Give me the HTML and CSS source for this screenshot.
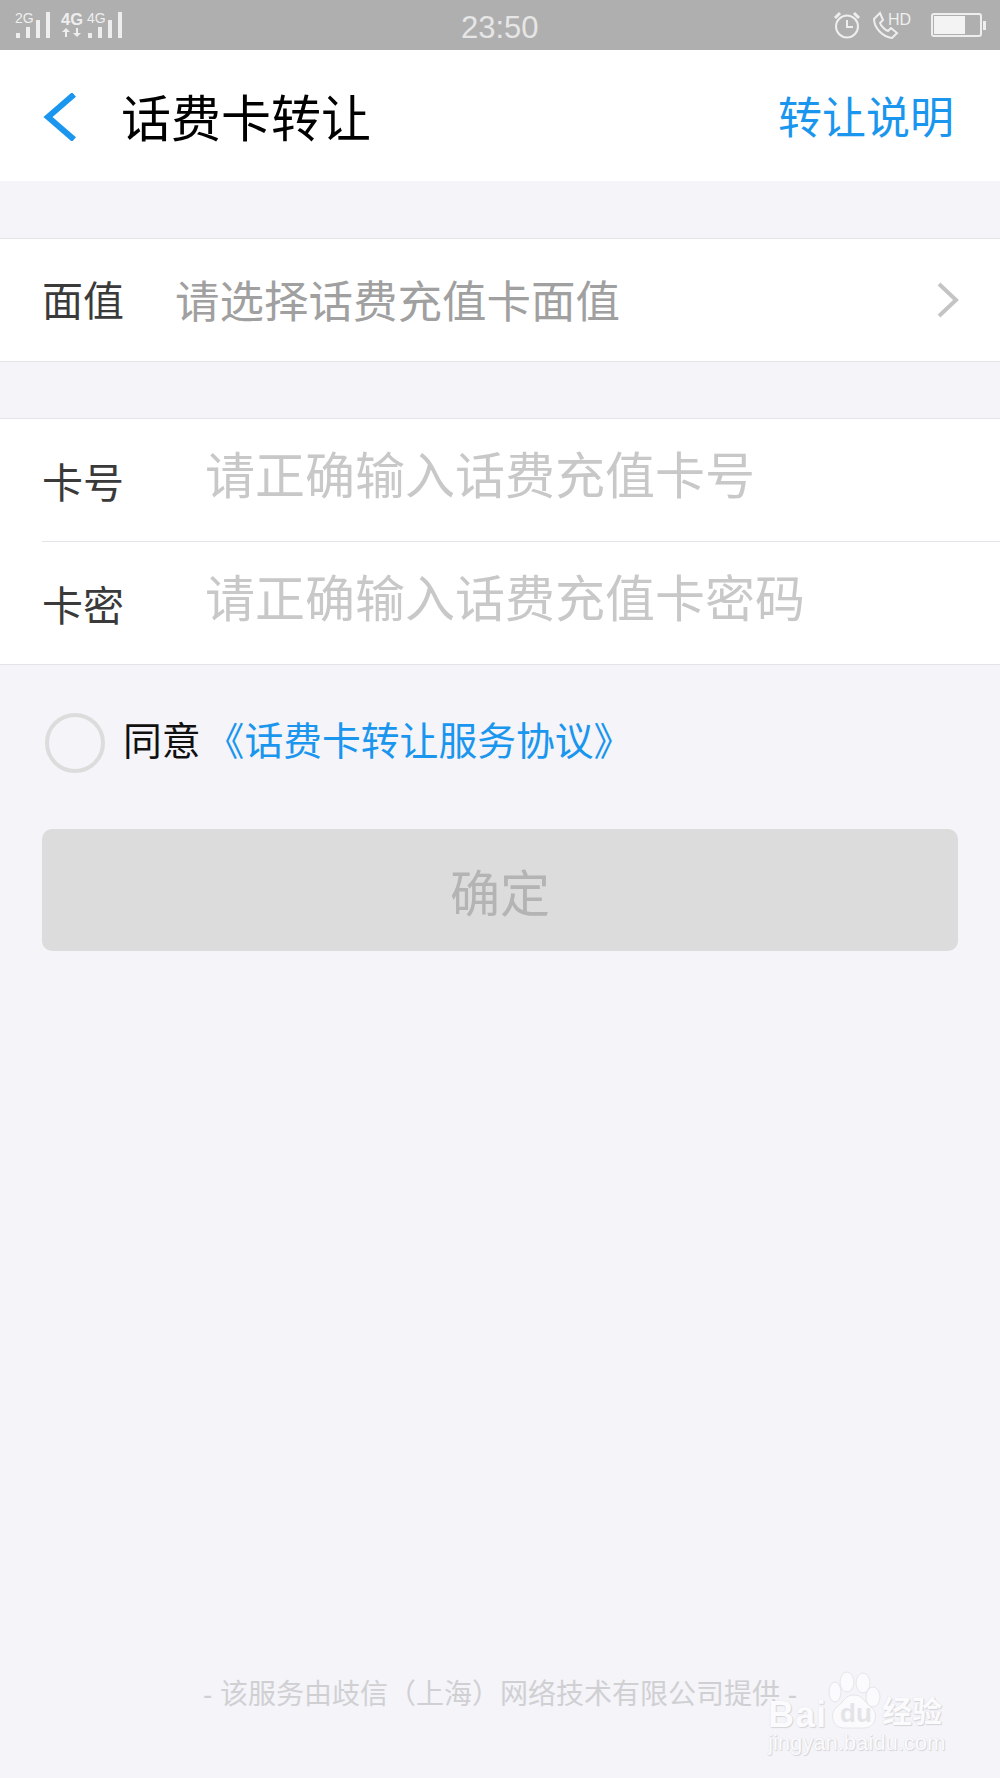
FILE: index.html
```html
<!DOCTYPE html>
<html lang="zh-CN">
<head>
    <meta charset="UTF-8">
    <title>话费卡转让</title>
    <link rel="stylesheet" href="styles.css">
</head>
<body>
<div class="main-container">
    <div class="status-bar">
        <div class="signals">
            <div class="signal">
                <span class="net">2G</span>
                <svg class="bars" width="36" height="26" viewBox="0 0 36 26"><path d="M1 26v-5h4v5zM11 26v-11h4v11zM21 26v-18h4v18zM31 26v-26h4v26z" fill="#eee"/></svg>
            </div>
            <div class="signal">
                <div class="net-stack">
                    <span class="net-big">4G</span>
                    <svg width="20" height="9" viewBox="0 0 20 9"><path d="M4 0l4 4H5v5H3V4H0zM15 9l-4-4h3V0h2v5h3z" fill="#eee"/></svg>
                </div>
                <span class="net">4G</span>
                <svg class="bars" width="36" height="26" viewBox="0 0 36 26"><path d="M1 26v-5h4v5zM11 26v-11h4v11zM21 26v-18h4v18zM31 26v-26h4v26z" fill="#eee"/></svg>
            </div>
        </div>
        <span class="clock">23:50</span>
        <div class="status-icons">
            <svg width="28" height="28" viewBox="0 0 28 28" fill="none" stroke="#eee" stroke-width="2"><circle cx="14" cy="15.500" r="11"/><path d="M14 9v7h6"/><path d="M2 7l5-5M26 7l-5-5" stroke-width="3"/></svg>
            <div class="call">
                <svg width="28" height="28" viewBox="0 0 28 28" fill="none" stroke="#eee" stroke-width="2"><path d="M8 2L2 8c0 9 9 18 18 19l5-5-6-5-3 3c-3-1-7-5-8-8l3-3z"/></svg>
                <span class="hd">HD</span>
            </div>
            <div class="battery"><div class="battery-level"></div></div>
            <div class="battery-tip"></div>
        </div>
    </div>

    <header class="top-bar">
        <svg class="back" width="34" height="48" viewBox="0 0 34 48" fill="none"><path d="M31 1.500L5 24l26 22.500" stroke="#1a96ee" stroke-width="6"/></svg>
        <h1 class="title">话费卡转让</h1>
        <a class="explain">转让说明</a>
    </header>

    <section class="group group-value">
        <div class="row">
            <span class="label">面值</span>
            <span class="select-hint">请选择话费充值卡面值</span>
            <svg class="chevron" width="22" height="36" viewBox="0 0 22 36" fill="none"><path d="M2 2l17 16L2 34" stroke="#c4c4c4" stroke-width="4"/></svg>
        </div>
    </section>

    <section class="group group-card">
        <div class="row row-input row-line">
            <span class="label">卡号</span>
            <span class="input-hint">请正确输入话费充值卡号</span>
        </div>
        <div class="row row-input">
            <span class="label">卡密</span>
            <span class="input-hint">请正确输入话费充值卡密码</span>
        </div>
    </section>

    <div class="agree">
        <span class="radio"></span>
        <span class="agree-text">同意<a class="link">《话费卡转让服务协议》</a></span>
    </div>

    <button class="confirm">确定</button>

    <footer class="foot">
        <p class="provider">- 该服务由歧信（上海）网络技术有限公司提供 -</p>
        <div class="watermark">
            <svg class="paw" width="60" height="64" viewBox="0 0 60 64">
                <g fill="#fbfbfd" stroke="#e6e6ea">
                    <ellipse cx="11" cy="24" rx="6" ry="10"/>
                    <ellipse cx="23" cy="14" rx="7" ry="10"/>
                    <ellipse cx="39" cy="15" rx="7" ry="10"/>
                    <ellipse cx="49" cy="29" rx="7" ry="10"/>
                    <path d="M30 27c9 0 10 7 17 12 8 6 5 21-7 21H20C8 60 5 45 13 39c7-5 8-12 17-12z"/>
                </g>
            </svg>
            <span class="wm-bai">Bai</span>
            <span class="wm-du">du</span>
            <span class="wm-jy">经验</span>
            <span class="wm-url">jingyan.baidu.com</span>
        </div>
    </footer>
</div>
</body>
</html>
```

FILE: styles.css
```css
body {
    margin: 0;
    background-color: #f4f4f9;
    font-family: "Liberation Sans", "Noto Sans CJK SC", sans-serif;
}
.main-container {
    width: 1000px;
    height: 1778px;
    display: flex;
    flex-direction: column;
    overflow: hidden;
}

/* status bar */
.status-bar {
    height: 50px;
    background-color: #afafaf;
    display: flex;
    align-items: center;
    justify-content: space-between;
    padding: 0 14px 0 15px;
    position: relative;
    color: #eee;
}
.signals { display: flex; gap: 10px; }
.signal { display: flex; height: 38px; align-items: flex-start; }
.net { font-size: 14px; line-height: 15px; margin-top: 5px; color: #eee; }
.net-big { font-size: 16.500px; font-weight: bold; line-height: 16px; display: block; color: #eee; }
.net-stack { display: flex; flex-direction: column; align-items: center; padding-top: 5px; margin-right: 4px; gap: 1px; }
.bars { margin-top: 6px; margin-left: -18.700px; }
.clock {
    position: absolute;
    left: 461px;
    top: 10px;
    font-size: 31px;
    line-height: 36px;
    color: #e6e6e6;
}
.status-icons { display: flex; align-items: center; }
.call { display: flex; align-items: flex-start; margin-left: 11px; height: 28px; }
.hd { font-size: 16px; line-height: 18px; margin-left: -12px; }
.battery {
    width: 45px;
    height: 18px;
    border: 2px solid #eee;
    border-radius: 3px;
    margin-left: 20px;
    padding: 1px;
}
.battery-level { width: 31px; height: 100%; background-color: #f3f3f3; }
.battery-tip { width: 3px; height: 9px; background-color: #eee; margin-left: 1px; }

/* header */
.top-bar {
    height: 129px;
    padding: 0 46px 2px 43px;
    background-color: #fff;
    display: flex;
    align-items: center;
}
.back { margin: 4px 44px 0 0; flex: none; }
.title { margin: 0; font-size: 50px; font-weight: normal; color: #000; flex: 1; }
.explain { font-size: 44px; color: #1a96ee; }

/* form rows */
.group {
    background-color: #fff;
    border-top: 1px solid #e4e4e8;
    border-bottom: 1px solid #e4e4e8;
}
.group-value { margin-top: 57px; }
.group-card { margin-top: 56px; }
.row {
    height: 118px;
    padding: 0 42px 4px;
    display: flex;
    align-items: center;
}
.label { font-size: 41px; color: #3a3a3a; flex: none; }
.select-hint { font-size: 44.500px; color: #a0a0a0; margin-left: 51px; flex: 1; }
.chevron { flex: none; margin: 4px -1px 0 0; }
.row-input {
    height: 122px;
    padding: 0;
    margin-left: 42px;
    align-items: flex-start;
}
.row-line { border-bottom: 1px solid #e4e4e8; }
.row-input .label { margin-top: 31px; }
.input-hint { font-size: 50px; color: #c8c8c8; margin-left: 81px; margin-top: 28px; line-height: 60px; }

/* agree line */
.agree {
    display: flex;
    align-items: center;
    margin: 48px 0 0 45px;
}
.radio {
    width: 52px;
    height: 52px;
    border: 4px solid #dcdcdc;
    border-radius: 50%;
    flex: none;
}
.agree-text { font-size: 38.800px; line-height: 40px; color: #111; margin: 0 0 3px 18px; }
.link { color: #1a96ee; margin-left: 5px; }

/* button */
.confirm {
    margin: 56px 42px 0;
    height: 122px;
    border: none;
    border-radius: 10px;
    background-color: #dcdcdc;
    color: #b4b4b4;
    font-family: inherit;
    font-size: 50px;
}

/* bottom */
.foot {
    margin-top: auto;
    position: relative;
    height: 132px;
}
.provider {
    margin: 0;
    padding-top: 31px;
    text-align: center;
    font-size: 28px;
    line-height: 36px;
    color: #d0d0d3;
    white-space: nowrap;
}
.watermark {
    position: absolute;
    left: 764px;
    top: 20px;
    width: 190px;
    height: 100px;
}
.paw { position: absolute; left: 60px; top: 2px; }
.wm-bai, .wm-du, .wm-jy, .wm-url {
    position: absolute;
    color: #fbfbfd;
    text-shadow: 0 0 1px #d4d4d8, 1px 1px 1px #d4d4d8;
    white-space: nowrap;
}
.wm-bai { left: 4px; top: 28px; font-size: 36px; font-weight: bold; letter-spacing: 1px; }
.wm-du { left: 76px; top: 32px; font-size: 26px; font-weight: bold; color: #e4e4e8; text-shadow: none; }
.wm-jy { left: 118px; top: 31px; font-size: 30px; line-height: 30px; font-weight: bold; }
.wm-url { left: 4px; top: 64px; font-size: 22px; }
```
